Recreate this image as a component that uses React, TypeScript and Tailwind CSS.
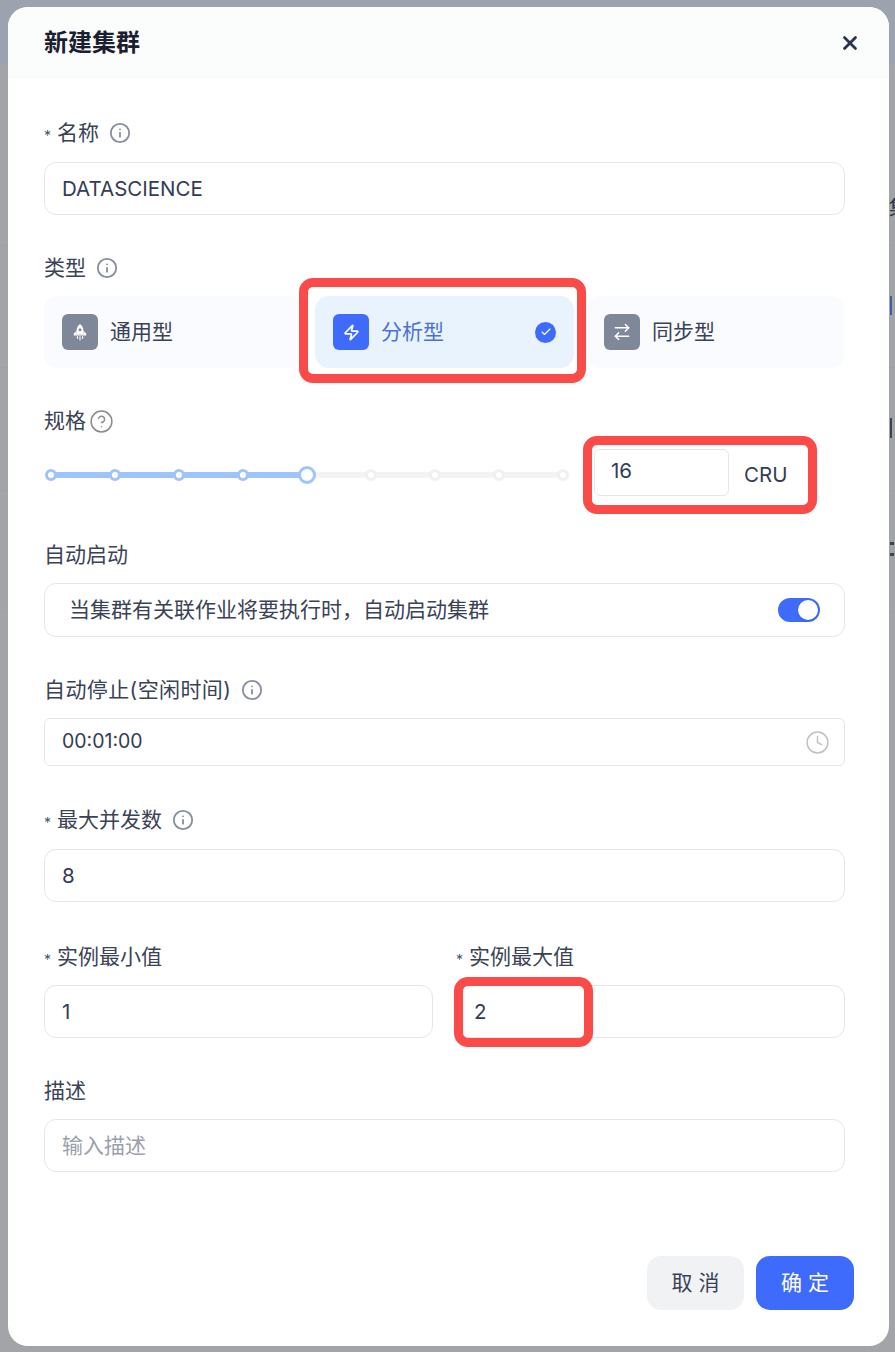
import { ArrowRightLeft, Check, CircleHelp, Clock, Info, X, Zap } from "lucide-react"

const FONT = "font-['Inter','Noto_Sans_CJK_SC',sans-serif]"

function RocketIcon() {
  return (
    <svg width="18" height="18" viewBox="0 0 18 18" fill="none">
      <path d="M9 1C11.4 2.9 12.4 5.2 12.4 7.6V11.6H5.6V7.6C5.6 5.2 6.6 2.9 9 1Z" fill="white" />
      <circle cx="9" cy="6.8" r="1.5" fill="#7f8898" />
      <path d="M5.6 7.8L2.8 10.6V12.6H15.2V10.6L12.4 7.8V11.6H5.6Z" fill="white" />
      <path d="M6.4 13.6V15.4M9 13.6V17M11.6 13.6V15.4" stroke="white" strokeWidth="1.1" strokeLinecap="round" />
    </svg>
  )
}

function Label({ text, required, children }: { text: string; required?: boolean; children?: React.ReactNode }) {
  return (
    <div className="flex h-7 items-center text-[21px] text-[#3a4256]">
      {required && <span className="mr-[6px] mt-1 text-[14px] text-[#4a5264]">*</span>}
      <span>{text}</span>
      {children}
    </div>
  )
}

function InfoIcon() {
  return <Info size={22} strokeWidth={2} className="ml-[10px] text-[#868e9f]" />
}

function TextBox({ value, placeholder, className = "" }: { value?: string; placeholder?: string; className?: string }) {
  return (
    <div
      className={`flex h-[53px] items-center rounded-[12px] border border-[#e5e6e9] bg-white px-[17px] ${
        value ? "pt-px text-[20.5px] text-[#333c54]" : "text-[21px] text-[#9aa0ab]"
      } ${className}`}
    >
      {value ?? placeholder}
    </div>
  )
}

function TypeCard({ name, icon, active }: { name: string; icon: React.ReactNode; active?: boolean }) {
  return (
    <div
      className={`flex h-[72px] items-center rounded-[14px] px-[18px] ${
        active ? "bg-[#e8f3fe]" : "bg-[#f9fbff]"
      }`}
    >
      <span
        className={`flex h-9 w-9 items-center justify-center rounded-[6px] ${
          active ? "bg-[#3f6bfd]" : "bg-[#7f8898]"
        }`}
      >
        {icon}
      </span>
      <span className={`ml-3 text-[21px] ${active ? "text-[#4b71d6]" : "text-[#3a4256]"}`}>{name}</span>
      {active && (
        <span className="ml-auto flex h-[21px] w-[21px] items-center justify-center rounded-full bg-[#3f6bfd]">
          <Check size={12} strokeWidth={2.2} className="text-white" />
        </span>
      )}
    </div>
  )
}

function Slider() {
  const dots = [0, 1, 2, 3, 4, 5, 6, 7, 8]
  return (
    <div className="relative ml-px mt-[5px] flex h-5 w-[524px] items-center justify-between">
      <div className="absolute inset-x-[6px] h-[6px] bg-[#f3f3f3]" />
      <div className="absolute left-[6px] h-[6px] w-[256px] bg-[#9ec5fb]" />
      {dots.map((d) =>
        d === 4 ? (
          <span key={d} className="relative -mx-[3px] h-[18px] w-[18px] rounded-full border-[3px] border-[#9ec5fb] bg-white" />
        ) : (
          <span
            key={d}
            className={`relative h-3 w-3 rounded-full border-[3px] bg-white ${
              d < 4 ? "border-[#9ec5fb]" : "border-[#f0f0f0]"
            }`}
          />
        ),
      )}
    </div>
  )
}

export default function App() {
  return (
    <div className={`relative h-[1352px] w-[895px] overflow-hidden bg-[#a3a4a8] pl-2 pr-[6px] pt-[7px] ${FONT}`}>
      {/* page behind the overlay */}
      <div className="absolute inset-x-0 top-0 h-16 bg-[#9ca3af]" />
      <div className="absolute right-0 top-[198px] h-[20px] w-[6px] overflow-hidden text-[20px] leading-[20px] text-[#2e3444]">集</div>
      <div className="absolute left-[890px] top-[296px] h-[19px] w-[2px] bg-[#3f5f9f]" />
      <div className="absolute left-[890px] top-[418px] h-[20px] w-[2px] bg-[#3a4256]" />
      <div className="absolute left-[890px] top-[542px] h-[3px] w-[4px] bg-[#3a4256]" />
      <div className="absolute left-[890px] top-[553px] h-[3px] w-[4px] bg-[#3a4256]" />
      <div className="absolute inset-x-0 top-[245px] h-px bg-[#9ea0a4]" />
      <div className="absolute inset-x-0 top-[367px] h-px bg-[#9ea0a4]" />
      <div className="absolute inset-x-0 top-[490px] h-px bg-[#9ea0a4]" />
      <div className="absolute inset-x-0 top-[612px] h-px bg-[#9ea0a4]" />

      <div className="relative flex h-[1339px] w-[881px] flex-col overflow-hidden rounded-[20px] bg-white">
        <div className="flex h-[72px] shrink-0 items-center justify-between bg-[#fbfdfd] pl-9 pr-[28px]">
          <span className="text-[24px] font-bold text-[#1b2030]">新建集群</span>
          <X size={22} strokeWidth={3} className="text-[#2b3350]" />
        </div>

        <div className="flex flex-1 flex-col pl-9 pr-[44px] pt-[40px]">
          <Label text="名称" required>
            <InfoIcon />
          </Label>
          <TextBox value="DATASCIENCE" className="mt-[15px]" />

          <div className="mt-[39px]">
            <Label text="类型">
              <InfoIcon />
            </Label>
          </div>
          <div className="mt-[14px] grid grid-cols-3 gap-3">
            <TypeCard name="通用型" icon={<RocketIcon />} />
            <TypeCard name="分析型" active icon={<Zap size={17} strokeWidth={2.4} className="text-white" />} />
            <TypeCard name="同步型" icon={<ArrowRightLeft size={20} strokeWidth={1.8} className="text-white" />} />
          </div>

          <div className="mt-[39px]">
            <Label text="规格">
              <CircleHelp size={25} strokeWidth={1.4} className="ml-[3px] text-[#8c8c8c]" />
            </Label>
          </div>
          <div className="mt-[14px] flex h-[47px] items-center">
            <Slider />
            <div className="ml-[25px] flex h-[47px] w-[135px] items-center rounded-[6px] border border-[#e5e6e9] bg-white pb-[3px] pl-[16px] text-[20.5px] text-[#333c54]">
              16
            </div>
            <span className="ml-[15px] mt-[6px] text-[20.5px] text-[#333c54]">CRU</span>
          </div>

          <div className="mt-[45px]">
            <Label text="自动启动" />
          </div>
          <div className="mt-[14px] flex h-[54px] items-center justify-between rounded-[12px] border border-[#e5e6e9] pl-[24px] pr-6 text-[21px] text-[#3a4256]">
            <span>当集群有关联作业将要执行时，自动启动集群</span>
            <span className="flex h-6 w-[42px] items-center justify-end rounded-full bg-[#3f6bfd] pr-[2px]">
              <span className="h-5 w-5 rounded-full bg-white shadow-sm" />
            </span>
          </div>

          <div className="mt-[39px] tracking-[0.4px]">
            <Label text="自动停止(空闲时间)">
              <InfoIcon />
            </Label>
          </div>
          <div className="mt-[14px] flex h-[48px] items-center justify-between rounded-[6px] border border-[#e5e6e9] pl-[17px] pr-[14px] text-[19.5px] text-[#333c54]">
            <span>00:01:00</span>
            <Clock size={25} strokeWidth={1.4} className="text-[#c2c2c2]" />
          </div>

          <div className="mt-[40px]">
            <Label text="最大并发数" required>
              <InfoIcon />
            </Label>
          </div>
          <TextBox value="8" className="mt-[15px]" />

          <div className="mt-[41px] grid grid-cols-2 gap-x-[23px]">
            <div>
              <Label text="实例最小值" required />
              <TextBox value="1" className="mt-[14px]" />
            </div>
            <div>
              <Label text="实例最大值" required />
              <TextBox value="2" className="mt-[14px]" />
            </div>
          </div>

          <div className="mt-[39px]">
            <Label text="描述" />
          </div>
          <TextBox placeholder="输入描述" className="mt-[14px]" />

          <div className="mr-[-9px] mt-[84px] flex justify-end gap-3">
            <button className="h-[54px] w-[97px] rounded-[14px] bg-[#f1f2f4] text-[21px] text-[#3a4256]">
              取 消
            </button>
            <button className="h-[54px] w-[98px] rounded-[14px] bg-[#3f6bfd] text-[21px] text-white">
              确 定
            </button>
          </div>
        </div>
      </div>

      {/* red annotation frames */}
      <div className="absolute left-[299px] top-[278px] h-[105px] w-[287px] rounded-[14px] border-[9px] border-[#fb4b48]" />
      <div className="absolute left-[583px] top-[436px] h-[78px] w-[234px] rounded-[14px] border-[9px] border-[#fb4b48]" />
      <div className="absolute left-[454px] top-[977px] h-[70px] w-[139px] rounded-[14px] border-[9px] border-[#fb4b48]" />
    </div>
  )
}
